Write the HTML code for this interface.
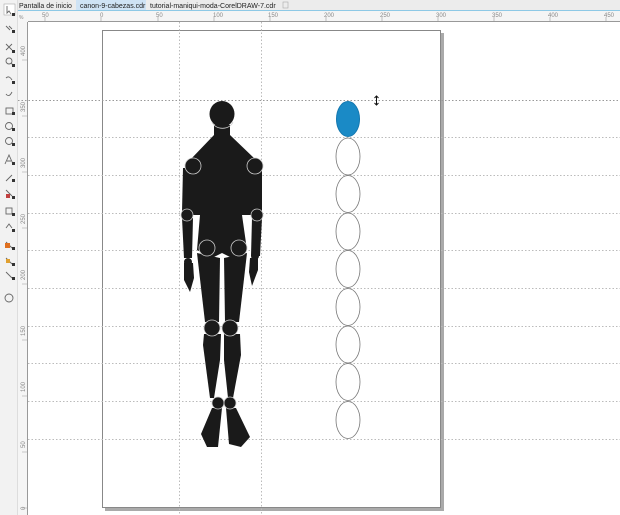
<!DOCTYPE html>
<html><head><meta charset="utf-8"><style>
html,body{margin:0;padding:0;width:620px;height:515px;overflow:hidden;background:#fff;font-family:"Liberation Sans",sans-serif}
</style></head><body>
<svg width="620" height="515" viewBox="0 0 620 515" xmlns="http://www.w3.org/2000/svg" style="position:absolute;left:0;top:0">
<rect x="0" y="0" width="620" height="10" fill="#ececec"/>
<rect x="76" y="0" width="70" height="10" fill="#cfe3f5"/>
<line x1="17" y1="10.5" x2="620" y2="10.5" stroke="#8ec9e6" stroke-width="1"/>
<text x="19" y="8" font-size="7" fill="#222">Pantalla de inicio</text>
<text x="80" y="8" font-size="7" fill="#222">canon-9-cabezas.cdr</text>
<text x="150" y="8" font-size="7" fill="#222">tutorial-maniqui-moda-CorelDRAW-7.cdr</text>
<rect x="283" y="2" width="5" height="6" fill="none" stroke="#aaa" stroke-width="0.6"/>
<rect x="0" y="0" width="17" height="515" fill="#f2f2f2"/>
<line x1="17.5" y1="0" x2="17.5" y2="515" stroke="#ddd"/>
<rect x="4" y="4" width="11" height="11" fill="#fff" stroke="#aaa" stroke-width="0.6"/>
<g fill="none" stroke="#666" stroke-width="0.9">
<path d="M7 6 l0 7 l2-2 l2 3"/>
<path d="M6 26 l4 4 M9 26 l3 3"/>
<path d="M6 44 l6 6 M12 44 l-6 6"/>
<circle cx="9" cy="61" r="3"/><path d="M11 63 l3 3"/>
<path d="M6 78 q3 -3 6 2"/>
<path d="M6 94 q3 4 6 -2"/>
<rect x="6" y="108" width="7" height="6"/>
<circle cx="9" cy="126" r="3.5"/>
<circle cx="9" cy="141" r="3.5"/>
<path d="M5 164 l4 -9 l4 9 M7 161 h4"/>
<path d="M6 181 l6 -6"/>
<path d="M6 190 l6 6"/>
<rect x="6" y="208" width="6" height="6"/>
<path d="M6 228 l3 -4 l3 4"/>
<path d="M6 242 l6 6"/>
<path d="M6 258 l6 6"/>
<path d="M6 272 l6 6"/>
<circle cx="9" cy="298" r="4"/>
</g>
<rect x="5" y="243" width="5" height="5" fill="#e07020"/>
<rect x="6" y="194" width="4" height="4" fill="#c04040"/>
<rect x="6" y="259" width="4" height="4" fill="#e0a030"/>
<g fill="#333"><path d="M12 13 h3 v3 h-3z M12 30 h3v3h-3z M12 50 h3v3h-3z M12 64 h3v3h-3z M12 81 h3v3h-3z M12 112 h3v3h-3z M12 128 h3v3h-3z M12 143 h3v3h-3z M12 162 h3v3h-3z M12 179 h3v3h-3z M12 196 h3v3h-3z M12 213 h3v3h-3z M12 229 h3v3h-3z M12 247 h3v3h-3z M12 263 h3v3h-3z M12 277 h3v3h-3z"/></g>
<rect x="18" y="11" width="602" height="11" fill="#f5f5f5"/>
<line x1="18" y1="21.5" x2="620" y2="21.5" stroke="#999"/>
<rect x="18" y="11" width="10" height="504" fill="#f5f5f5"/>
<line x1="27.5" y1="22" x2="27.5" y2="515" stroke="#999"/>
<g stroke="#999" stroke-width="0.6">
<path d="M45 17v5 M101 17v5 M158 17v5 M214 17v5 M270 17v5 M326 17v5 M382 17v5 M438 17v5 M494 17v5 M550 17v5 M606 17v5"/>
<path d="M22 60h6 M22 116h6 M22 172h6 M22 228h6 M22 284h6 M22 340h6 M22 396h6 M22 452h6 M22 508h6"/>
</g>
<g font-size="6" fill="#888">
<text x="42" y="17">50</text><text x="100" y="17">0</text><text x="156" y="17">50</text><text x="213" y="17">100</text><text x="268" y="17">150</text><text x="324" y="17">200</text><text x="380" y="17">250</text><text x="436" y="17">300</text><text x="492" y="17">350</text><text x="548" y="17">400</text><text x="604" y="17">450</text>
<text x="19" y="19" font-size="5">%</text>
</g>
<g font-size="6" fill="#888">
<text transform="translate(25,56) rotate(-90)">400</text>
<text transform="translate(25,112) rotate(-90)">350</text>
<text transform="translate(25,168) rotate(-90)">300</text>
<text transform="translate(25,224) rotate(-90)">250</text>
<text transform="translate(25,280) rotate(-90)">200</text>
<text transform="translate(25,336) rotate(-90)">150</text>
<text transform="translate(25,392) rotate(-90)">100</text>
<text transform="translate(25,448) rotate(-90)">50</text>
<text transform="translate(25,510) rotate(-90)">0</text>
</g>
<rect x="441" y="33" width="3" height="478" fill="#aaa"/>
<rect x="105" y="508" width="339" height="3" fill="#aaa"/>
<rect x="102.5" y="30.5" width="338" height="477" fill="#fff" stroke="#888"/>
<g stroke="#bbb" stroke-width="1" stroke-dasharray="1.5,2">
<path d="M28 137.5H620 M28 175.5H620 M28 213.5H620 M28 250.5H620 M28 288.5H620 M28 326.5H620 M28 363.5H620 M28 401.5H620 M28 439.5H620"/>
<path d="M179.5 22V515 M261.5 22V515"/>
</g>
<path d="M18 100.5H620" stroke="#999" stroke-dasharray="1.5,2"/>
<g fill="#1a1a1a" stroke="none">
<ellipse cx="222" cy="114" rx="12.5" ry="13"/>
<rect x="214" y="125" width="16" height="14"/>
<polygon points="214,135 230,135 256,160 260,215 242,215 200,215 186,215 190,160"/>
<polygon points="200,215 242,215 247,250 232,258 222,253 212,258 197,250"/>
<polygon points="183,168 196,168 195,212 182,212"/>
<polygon points="250,168 262,168 262,212 250,212"/>
<polygon points="182,218 193,218 192,258 184,258"/>
<polygon points="252,218 262,218 260,256 251,256"/>
<polygon points="184,263 193,263 194,278 190,292 184,280"/>
<polygon points="250,258 258,258 258,270 252,286 249,272"/>
<polygon points="197,253 220,258 219,322 205,322"/>
<polygon points="224,258 247,253 239,322 225,322"/>
<polygon points="204,334 221,334 220,360 214,398 210,398 203,345"/>
<polygon points="224,334 240,334 241,355 233,398 228,398 224,360"/>
<polygon points="212,408 222,408 218,447 207,447 201,434"/>
<polygon points="226,408 236,408 250,437 241,447 229,444"/>
<circle cx="193" cy="166" r="8"/><circle cx="255" cy="166" r="8"/>
<circle cx="187" cy="215" r="6"/><circle cx="257" cy="215" r="6"/>
<circle cx="188" cy="262" r="4"/><circle cx="255" cy="256" r="4"/>
<circle cx="207" cy="248" r="8"/><circle cx="239" cy="248" r="8"/>
<circle cx="212" cy="328" r="8"/><circle cx="230" cy="328" r="8"/>
<circle cx="218" cy="403" r="6"/><circle cx="230" cy="403" r="6"/>
</g>
<g fill="none" stroke="#ccc" stroke-width="0.8">
<path d="M212 122 a11 9 0 0 0 21 0"/>
<circle cx="193" cy="166" r="8"/><circle cx="255" cy="166" r="8"/>
<circle cx="187" cy="215" r="6"/><circle cx="257" cy="215" r="6"/>
<circle cx="207" cy="248" r="8"/><circle cx="239" cy="248" r="8"/>
<circle cx="212" cy="328" r="8"/><circle cx="230" cy="328" r="8"/>
<circle cx="218" cy="403" r="6"/><circle cx="230" cy="403" r="6"/>
</g>
<ellipse cx="348" cy="119" rx="11.5" ry="17.5" fill="#1a8ac6" stroke="#1478b0"/>
<g fill="#fff" stroke="#777" stroke-width="0.8">
<ellipse cx="348" cy="156.5" rx="12" ry="18.5"/>
<ellipse cx="348" cy="194" rx="12" ry="18.5"/>
<ellipse cx="348" cy="231.5" rx="12" ry="18.5"/>
<ellipse cx="348" cy="269" rx="12" ry="18.5"/>
<ellipse cx="348" cy="307" rx="12" ry="18.5"/>
<ellipse cx="348" cy="344.5" rx="12" ry="18.5"/>
<ellipse cx="348" cy="382" rx="12" ry="18.5"/>
<ellipse cx="348" cy="420" rx="12" ry="18.5"/>
</g>
<path d="M376.5 96v9 M374.5 98l2-2 2 2 M374.5 103l2 2 2-2" stroke="#111" fill="none" stroke-width="1"/>
</svg>
</body></html>
